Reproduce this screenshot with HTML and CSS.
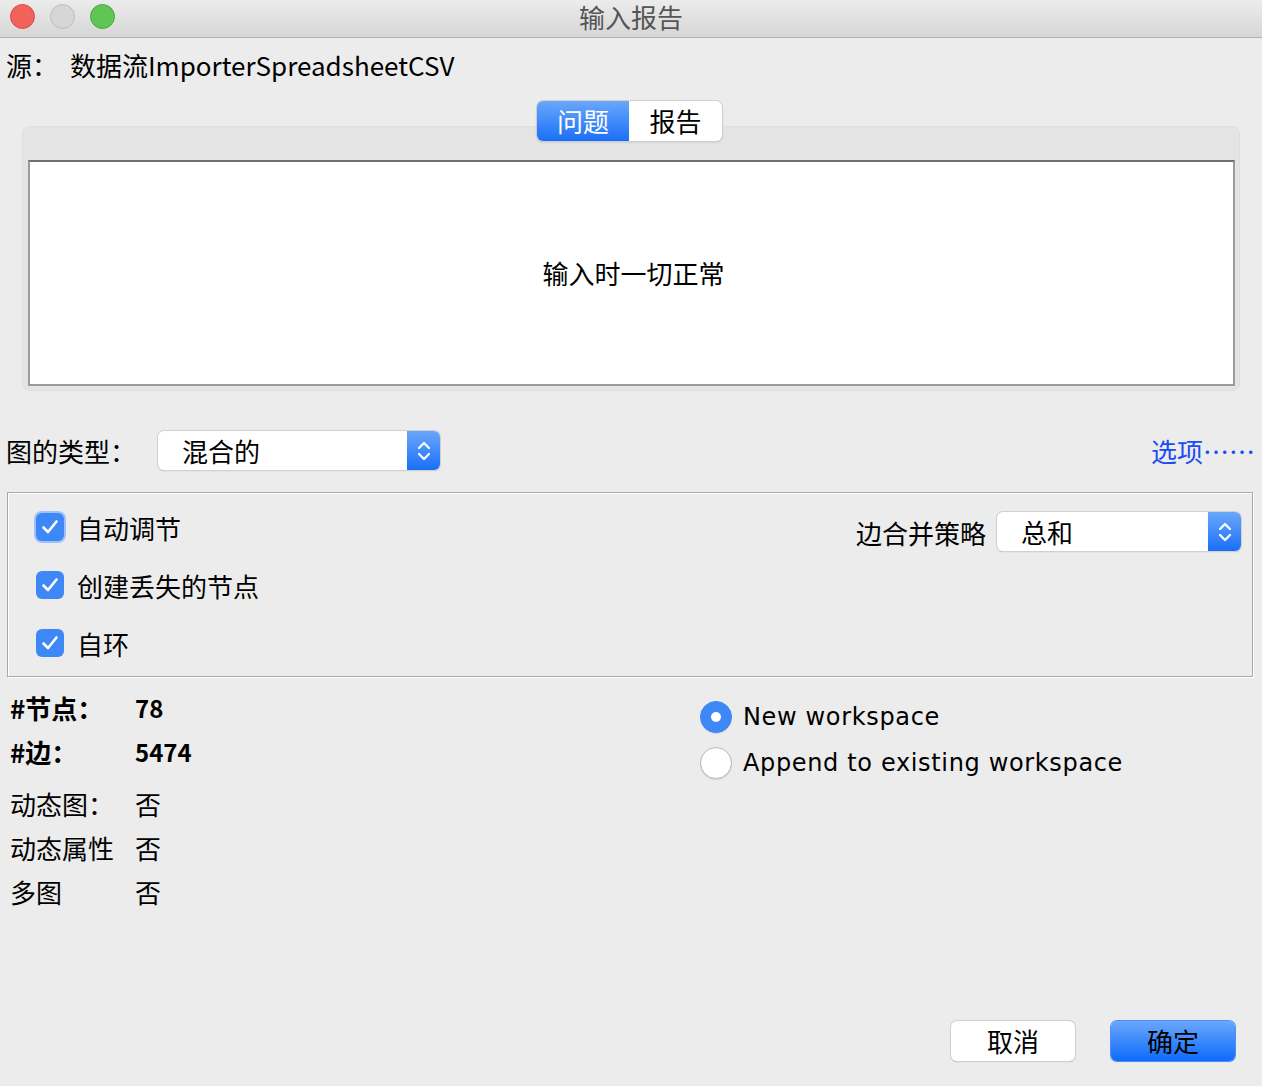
FILE: index.html
```html
<!DOCTYPE html>
<html lang="zh">
<head>
<meta charset="utf-8">
<title>输入报告</title>
<link rel="stylesheet" href="styles.css">
</head>
<body>
<div class="window">
  <header class="titlebar">
    <div class="lights">
      <span class="light red"></span>
      <span class="light gray"></span>
      <span class="light green"></span>
    </div>
    <div class="title">输入报告</div>
  </header>

  <div class="source">
    <span class="source-label">源：</span>
    <span class="source-value">数据流ImporterSpreadsheetCSV</span>
  </div>

  <div class="tabs">
    <div class="segmented">
      <span class="seg seg-active">问题</span>
      <span class="seg">报告</span>
    </div>
    <div class="tabbox">
      <div class="tabhead"></div>
      <div class="tabcontent">输入时一切正常</div>
    </div>
  </div>

  <div class="typerow">
    <span class="typelabel">图的类型：</span>
    <div class="select select-type">
      <span class="select-text">混合的</span>
      <span class="stepper">
        <svg width="14" height="24" viewBox="0 0 14 24"><path d="M2 9 L7 4 L12 9" fill="none" stroke="#fff" stroke-width="2.2" stroke-linecap="round" stroke-linejoin="round"/><path d="M2 15 L7 20 L12 15" fill="none" stroke="#fff" stroke-width="2.2" stroke-linecap="round" stroke-linejoin="round"/></svg>
      </span>
    </div>
    <a class="options">选项……</a>
  </div>

  <div class="panel">
    <div class="checks">
      <label class="check"><span class="box focus"><svg width="20" height="18" viewBox="0 0 20 18"><path d="M3.5 9.5 L8 14 L16.5 3.5" fill="none" stroke="#fff" stroke-width="2.6" stroke-linecap="round" stroke-linejoin="round"/></svg></span>自动调节</label>
      <label class="check"><span class="box"><svg width="20" height="18" viewBox="0 0 20 18"><path d="M3.5 9.5 L8 14 L16.5 3.5" fill="none" stroke="#fff" stroke-width="2.6" stroke-linecap="round" stroke-linejoin="round"/></svg></span>创建丢失的节点</label>
      <label class="check"><span class="box"><svg width="20" height="18" viewBox="0 0 20 18"><path d="M3.5 9.5 L8 14 L16.5 3.5" fill="none" stroke="#fff" stroke-width="2.6" stroke-linecap="round" stroke-linejoin="round"/></svg></span>自环</label>
    </div>
    <div class="merge">
      <span class="mergelabel">边合并策略</span>
      <div class="select select-merge">
        <span class="select-text">总和</span>
        <span class="stepper">
          <svg width="14" height="24" viewBox="0 0 14 24"><path d="M2 9 L7 4 L12 9" fill="none" stroke="#fff" stroke-width="2.2" stroke-linecap="round" stroke-linejoin="round"/><path d="M2 15 L7 20 L12 15" fill="none" stroke="#fff" stroke-width="2.2" stroke-linecap="round" stroke-linejoin="round"/></svg>
        </span>
      </div>
    </div>
  </div>

  <div class="lower">
    <div class="stats">
      <div class="stat bold"><span class="k">#节点：</span><span class="v">78</span></div>
      <div class="stat bold"><span class="k">#边：</span><span class="v">5474</span></div>
      <div class="stat gapped"><span class="k">动态图：</span><span class="v">否</span></div>
      <div class="stat"><span class="k">动态属性</span><span class="v">否</span></div>
      <div class="stat"><span class="k">多图</span><span class="v">否</span></div>
    </div>
    <div class="radios">
      <label class="radio"><span class="dot on"></span>New workspace</label>
      <label class="radio"><span class="dot"></span>Append to existing workspace</label>
    </div>
  </div>

  <div class="footer">
    <button class="btn">取消</button>
    <button class="btn btn-primary">确定</button>
  </div>
</div>
</body>
</html>
```
FILE: styles.css
```css
* { box-sizing: border-box; }
html, body { margin: 0; padding: 0; }
body {
  background: #ececec;
  font-family: "Noto Sans CJK SC", "Noto Sans", sans-serif;
  font-size: 26px;
  color: #000;
}
.window {
  width: 1262px;
  height: 1086px;
  display: flex;
  flex-direction: column;
}
.titlebar {
  height: 38px;
  flex: none;
  background: linear-gradient(#ececec, #d6d6d6);
  border-bottom: 1px solid #b3b3b3;
  display: flex;
  align-items: flex-start;
  padding-top: 4px;
  position: relative;
}
.lights {
  display: flex;
  gap: 15px;
  padding-left: 10px;
}
.light {
  width: 25px;
  height: 25px;
  border-radius: 50%;
  display: block;
}
.light.red { background: #f0625a; border: 1px solid #dc4b43; }
.light.gray { background: #d6d6d6; border: 1px solid #bdbdbd; }
.light.green { background: #5fc553; border: 1px solid #4aa83f; }
.title {
  position: absolute;
  left: 0;
  right: 0;
  top: 0;
  line-height: 34px;
  text-align: center;
  color: #555;
  font-size: 26px;
}
.source {
  margin-top: 11px;
  padding-left: 6px;
  line-height: 32px;
  display: flex;
}
.source-label { width: 64px; }
.tabs {
  margin: 20px 22px 0 22px;
  display: flex;
  flex-direction: column;
  align-items: center;
}
.segmented {
  display: flex;
  height: 40px;
  border-radius: 6px;
  background: #fff;
  box-shadow: 0 0 0 1px #cfcfcf, 0 1px 2px rgba(0,0,0,0.25);
  position: relative;
  z-index: 2;
  margin-left: -3px;
}
.seg {
  width: 93px;
  line-height: 40px;
  text-align: center;
  font-size: 26px;
}
.seg-active {
  width: 92px;
  background: linear-gradient(#6aa7fb, #1a6ff7);
  color: #fff;
  border-radius: 6px 0 0 6px;
}
.tabbox {
  margin-top: -15px;
  width: 1218px;
  height: 265px;
  background: #e4e4e4;
  border: 1px solid #dedede;
  border-radius: 8px;
  padding: 0 4px 4px 5px;
  display: flex;
  flex-direction: column;
}
.tabhead { height: 33px; flex: none; }
.tabcontent {
  flex: 1;
  background: #fff;
  border: 2px solid #9b9b9b;
  border-top-color: #6f6f6f;
  display: flex;
  align-items: center;
  justify-content: center;
  padding-left: 4px;
  padding-bottom: 1px;
}
.typerow {
  margin-top: 40px;
  display: flex;
  align-items: center;
  padding-left: 6px;
  padding-right: 7px;
}
.typelabel { width: 152px; }
.select {
  height: 39px;
  background: #fff;
  border-radius: 6px;
  box-shadow: 0 0 0 1px #d0d0d0, 0 1px 1px rgba(0,0,0,0.3);
  display: flex;
  align-items: center;
}
.select-text { flex: 1; padding-left: 24px; }
.stepper {
  width: 33px;
  height: 39px;
  border-radius: 0 6px 6px 0;
  background: linear-gradient(#6aa7fb, #1a6ff7);
  display: flex;
  align-items: center;
  justify-content: center;
}
.select-type { width: 282px; }
.options {
  margin-left: auto;
  color: #1b4cf2;
}
.panel {
  margin: 22px 9px 0 7px;
  height: 185px;
  border: 1px solid #a9a9a9;
  box-shadow: inset 1px 1px 0 #fff, 1px 1px 0 #fff;
  display: flex;
  padding: 19px 11px 0 28px;
}
.checks {
  display: flex;
  flex-direction: column;
  gap: 28px;
}
.check {
  display: flex;
  align-items: center;
  height: 30px;
  gap: 13px;
}
.box {
  width: 28px;
  height: 28px;
  border-radius: 6px;
  background: #3d88f6;
  display: flex;
  align-items: center;
  justify-content: center;
}
.box.focus {
  box-shadow: 0 0 0 2px #9cc2f7;
}
.merge {
  margin-left: auto;
  display: flex;
  align-items: center;
  height: 39px;
  margin-top: 0;
}
.mergelabel { margin-right: 11px; position: relative; top: 1px; }
.select-merge { width: 244px; }
.lower {
  margin-top: 8px;
  display: flex;
  padding-left: 10px;
}
.stats {
  width: 690px;
  display: flex;
  flex-direction: column;
}
.stat {
  display: flex;
  height: 44px;
  align-items: center;
}
.stat .k { width: 125px; }
.stat.bold { font-weight: bold; }
.stat.bold .v { font-size: 24px; }
.stat.gapped { margin-top: 8px; }
.radios {
  display: flex;
  flex-direction: column;
  gap: 15px;
  padding-top: 16px;
}
.radio {
  display: flex;
  align-items: center;
  height: 31px;
  gap: 11px;
  font-family: "DejaVu Sans", sans-serif;
  font-size: 24px;
  letter-spacing: 0.65px;
}
.dot {
  width: 32px;
  height: 32px;
  border-radius: 50%;
  background: #fff;
  border: 1px solid #b9b9b9;
  box-shadow: 0 1px 1px rgba(0,0,0,0.1);
  display: flex;
  align-items: center;
  justify-content: center;
}
.dot.on {
  background: #3d88f6;
  border-color: #3d88f6;
}
.dot.on::after {
  content: "";
  width: 10px;
  height: 10px;
  border-radius: 50%;
  background: #fff;
}
.footer {
  margin-top: auto;
  margin-bottom: 25px;
  display: flex;
  justify-content: flex-end;
  gap: 36px;
  padding-right: 27px;
}
.btn {
  width: 124px;
  height: 40px;
  border: none;
  border-radius: 6px;
  background: #fff;
  box-shadow: 0 0 0 1px #d0d0d0, 0 1px 1px rgba(0,0,0,0.3);
  font-family: "Noto Sans CJK SC", sans-serif;
  font-size: 26px;
  color: #000;
  padding: 0;
  line-height: 40px;
}
.btn-primary {
  background: linear-gradient(#6aa7fb, #0d6bfb);
  box-shadow: 0 0 0 1px #4f8ff3, 0 1px 1px rgba(0,0,0,0.2);
}
```
